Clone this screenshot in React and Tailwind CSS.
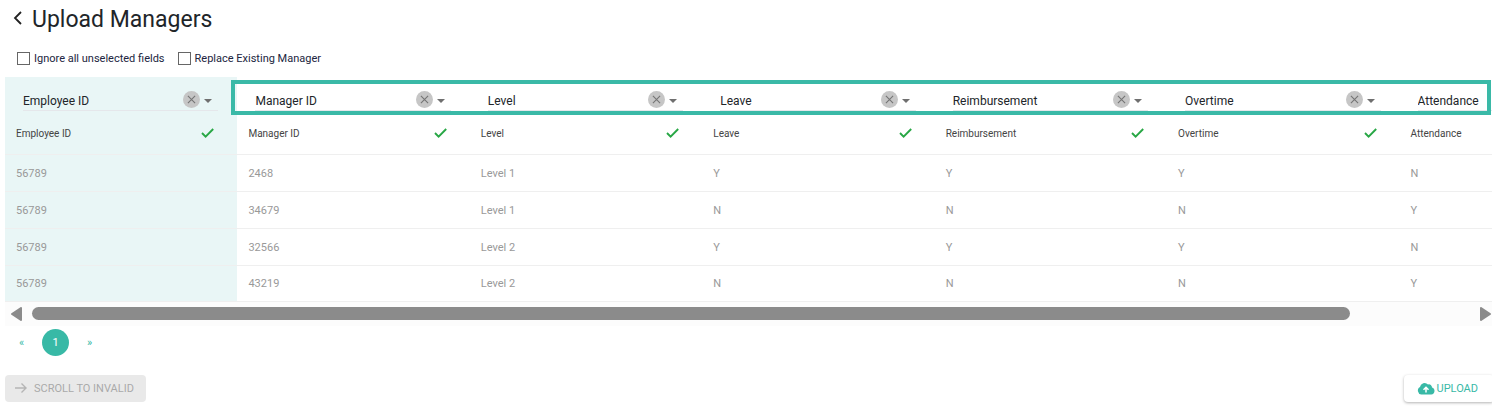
import { useState } from "react";

const COLUMNS = ["Employee ID", "Manager ID", "Level", "Leave", "Reimbursement", "Overtime", "Attendance"];

const ROWS = [
  ["56789", "2468", "Level 1", "Y", "Y", "Y", "N"],
  ["56789", "34679", "Level 1", "N", "N", "N", "Y"],
  ["56789", "32566", "Level 2", "Y", "Y", "Y", "N"],
  ["56789", "43219", "Level 2", "N", "N", "N", "Y"],
];

function FieldSelect({ column, value, onChange }) {
  return (
    <div className="relative ml-[7px] mr-2 h-5 border-b border-gray-200">
      <select
        aria-label={`Field for ${column}`}
        className="block h-5 w-full appearance-none bg-transparent pr-12 text-[12px] leading-5 text-[#212529] outline-none"
        value={value}
        onChange={(e) => onChange(e.target.value)}
      >
        <option value=""></option>
        {COLUMNS.map((name) => (
          <option key={name} value={name}>{name}</option>
        ))}
      </select>
      <button
        type="button"
        aria-label={`Clear ${column}`}
        onClick={() => onChange("")}
        className="absolute right-[18px] top-0 flex size-[17px] items-center justify-center rounded-full bg-[#c6c6c6]"
      >
        <svg viewBox="0 0 10 10" className="size-[9px]" fill="none" stroke="#747474" strokeWidth="1.2">
          <path d="M1 1l8 8M9 1l-8 8" />
        </svg>
      </button>
      <svg viewBox="0 0 8 4" className="pointer-events-none absolute right-[6px] top-2 h-1 w-2" fill="#6f6f6f">
        <path d="M0 0h8L4 4z" />
      </svg>
    </div>
  );
}

function Option({ id, label, checked, onChange }) {
  return (
    <div className="flex items-center gap-1">
      <input
        id={id}
        type="checkbox"
        checked={checked}
        onChange={(e) => onChange(e.target.checked)}
        className="size-[13px] appearance-none border border-[#666] bg-white checked:bg-[#38b9a6]"
      />
      <label htmlFor={id} className="pt-px text-[11px] leading-4 text-[#212540]">{label}</label>
    </div>
  );
}

export default function App() {
  const [fields, setFields] = useState(COLUMNS);
  const [ignore, setIgnore] = useState(false);
  const [replace, setReplace] = useState(false);

  const setField = (index, value) => {
    setFields(fields.map((f, i) => (i === index ? value : f)));
  };

  return (
    <div className="overflow-hidden bg-white pb-1 pl-[5px] font-['Roboto',sans-serif] text-[#212529]">
      <header className="flex h-10 items-center gap-[9px] pl-2">
        <button type="button" aria-label="Back" className="pb-1">
          <svg viewBox="0 0 10 14" className="h-[14px] w-[10px]" fill="none" stroke="#222" strokeWidth="1.8">
            <path d="M8 1L2 7l6 6" />
          </svg>
        </button>
        <h1 className="text-[23px] leading-10">Upload Managers</h1>
      </header>

      <div className="flex h-9 items-center gap-[13px] pl-3">
        <Option id="ignore" label="Ignore all unselected fields" checked={ignore} onChange={setIgnore} />
        <Option id="replace" label="Replace Existing Manager" checked={replace} onChange={setReplace} />
      </div>

      <div className="relative mt-px overflow-hidden">
        <table className="w-[1627px] table-fixed border-collapse text-left">
          <thead>
            <tr className="h-[37px]">
              {COLUMNS.map((column, i) => (
                <th key={column} className="px-[11px] pt-[14px] pb-0 align-top font-normal first:bg-[#e9f6f6]">
                  <FieldSelect column={column} value={fields[i]} onChange={(value) => setField(i, value)} />
                </th>
              ))}
            </tr>
            <tr className="h-10 border-b border-[#efefef]">
              {COLUMNS.map((column) => (
                <th key={column} className="px-[11px] pb-0.5 font-normal first:bg-[#e9f6f6]">
                  <div className="flex items-center justify-between pr-3">
                    <span className="pt-0.5 text-[10px] leading-4 text-[#444]">{column}</span>
                    <svg viewBox="0 0 13 10" className="h-[10px] w-[13px]" fill="none" stroke="#28a745" strokeWidth="1.9">
                      <path d="M1 5l3.6 3.6L12.2 1" />
                    </svg>
                  </div>
                </th>
              ))}
            </tr>
          </thead>
          <tbody>
            {ROWS.map((row, r) => (
              <tr key={r} className="h-[37px] border-b border-[#efefef] last:h-9">
                {row.map((cell, c) => (
                  <td key={c} className="px-[11px] pt-0.5 text-[11px] leading-4 text-[#999] first:bg-[#e9f6f6]">{cell}</td>
                ))}
              </tr>
            ))}
          </tbody>
        </table>
        {/* outline around the mapped fields */}
        <div className="pointer-events-none absolute left-[226px] right-px top-[3px] h-[35px] border-4 border-[#3ab9a7]" />
      </div>

      <div className="flex h-6 items-center bg-[#fcfcfc] pl-[6px] pr-px">
        <svg viewBox="0 0 11 14" className="h-[14px] w-[11px]" fill="#8b8b8b" stroke="#8b8b8b" strokeWidth="2" strokeLinejoin="round">
          <path d="M10 1v12L1 7z" />
        </svg>
        <div className="mx-[10px] flex-1">
          <div className="h-[13px] w-11/12 rounded-full bg-[#8b8b8b]" />
        </div>
        <svg viewBox="0 0 11 14" className="h-[14px] w-[11px]" fill="#8b8b8b" stroke="#8b8b8b" strokeWidth="2" strokeLinejoin="round">
          <path d="M1 1v12l9-6z" />
        </svg>
      </div>

      <nav aria-label="Pages" className="flex h-[33px] items-center text-[11px] text-[#38b9a6]">
        <a href="#previous" className="w-[33px] pt-0.5 text-center">«</a>
        <a href="#1" className="mx-1 flex size-[27px] items-center justify-center rounded-full bg-[#38b9a6] pt-0.5 text-white">1</a>
        <a href="#next" className="w-[33px] pt-0.5 text-center">»</a>
      </nav>

      <footer className="mt-4 -mr-[2px] flex justify-between pb-1">
        <button type="button" disabled className="flex h-[27px] items-center gap-[7px] rounded bg-[#e9e9e9] pl-[10px] pr-3 text-[11px] text-[#a9a9a9]">
          <svg viewBox="0 0 12 10" className="h-[10px] w-[12px]" fill="none" stroke="#b5b5b5" strokeWidth="1.4">
            <path d="M0 5h11M6.5 0.6L11 5l-4.500 4.400" />
          </svg>
          <span className="pt-0.5">SCROLL TO INVALID</span>
        </button>
        <button type="button" className="flex h-[27px] items-center gap-[2px] rounded bg-white pl-[13px] pr-4 text-[11px] text-[#38b9a6] shadow-[0_1px_3px_rgba(0,0,0,0.3)]">
          <svg viewBox="0 0 18 13" className="h-[13px] w-[18px]">
            <path fill="#38b9a6" d="M4.300 12.500A4 4 0 0 1 3 5A4.600 4.600 0 0 1 11 2.500A3 3 0 0 1 15 5.500A3.600 3.600 0 0 1 14.300 12.500Z" />
            <path fill="none" stroke="#fff" strokeWidth="1.500" d="M9 10.500V5.500M6.500 7.800L9 5.300l2.500 2.500" />
          </svg>
          <span className="pt-0.5">UPLOAD</span>
        </button>
      </footer>
    </div>
  );
}
